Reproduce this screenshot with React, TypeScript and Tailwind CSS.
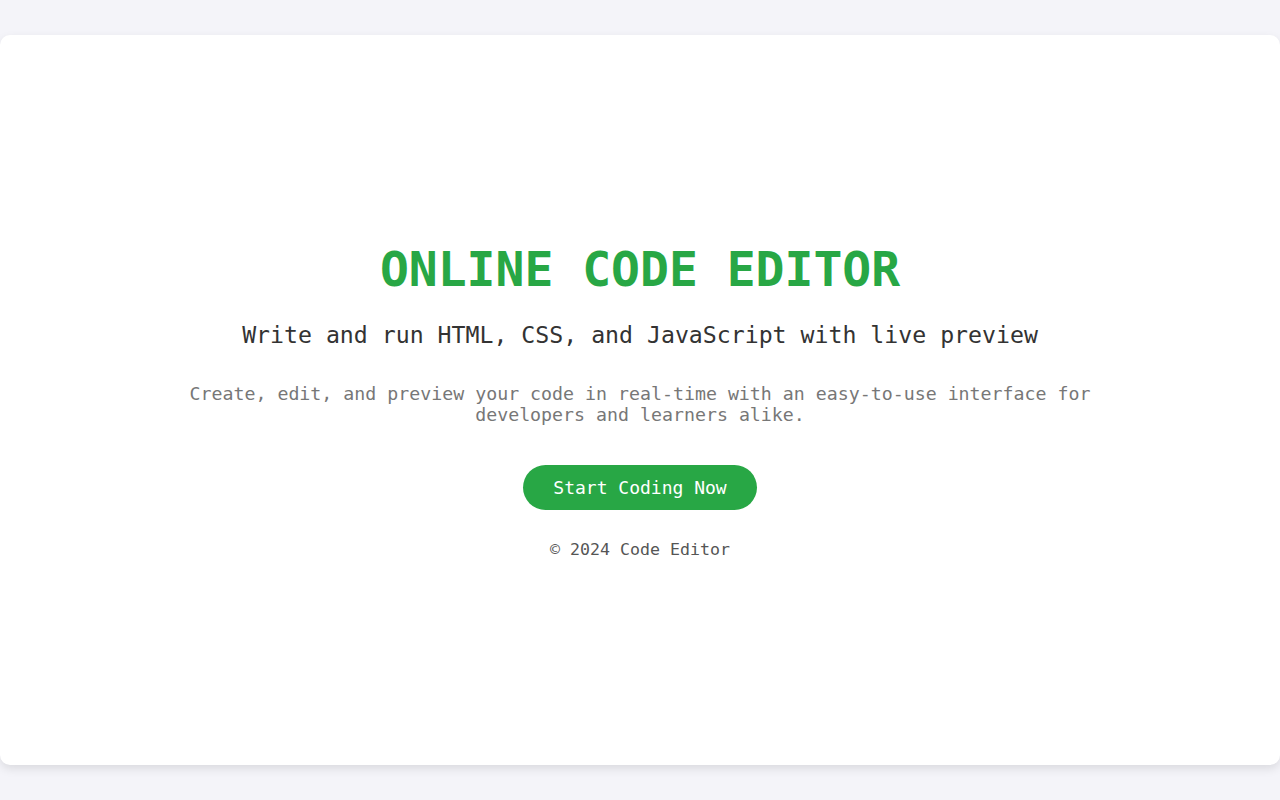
export default function App() {
  return (
    <div
      className="min-h-[800px] bg-[#f4f4f9] py-[35px]"
      style={{ fontFamily: '"DejaVu Sans Mono", monospace' }}
    >
      <div className="h-[730px] pb-[4px] bg-white rounded-[10px] shadow-[0_4px_10px_rgba(0,0,0,0.1)] flex flex-col items-center justify-center text-center">
        <h1 className="text-[48px] font-bold text-[#28a745] leading-normal">ONLINE CODE EDITOR</h1>
        <p className="mt-[13px] text-[23.2px] text-[#333] leading-normal">
          Write and run HTML, CSS, and JavaScript with live preview
        </p>
        <p className="mt-[30px] max-w-[920px] text-[18.25px] text-[#777] leading-[21px]">
          Create, edit, and preview your code in real-time with an easy-to-use interface for developers and learners alike.
        </p>
        <button className="mt-[40px] bg-[#28a745] text-white text-[18px] leading-[21px] px-[30px] py-[12px] rounded-full">
          Start Coding Now
        </button>
        <p className="mt-[28px] text-[16.6px] text-[#555]">© 2024 Code Editor</p>
      </div>
    </div>
  );
}
